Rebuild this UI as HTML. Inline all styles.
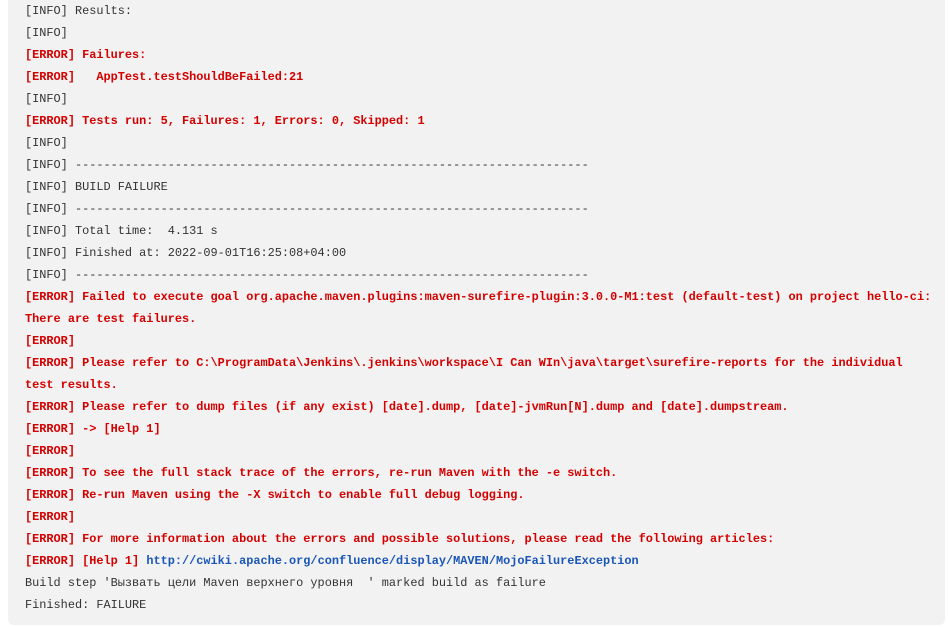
<!DOCTYPE html>
<html><head><meta charset="utf-8"><style>
html,body{margin:0;padding:0;background:#fff;width:948px;height:627px;overflow:hidden}
.box{position:absolute;left:8px;top:-10px;width:937px;height:635px;background:#f2f2f2;border-radius:6px}
pre{position:absolute;left:25px;top:0;margin:0;font-family:"Liberation Mono","DejaVu Sans Mono",monospace;font-size:11.9px;line-height:22px;color:#333}
.e{color:#d40000;font-weight:bold}
a{color:#1a56b8;font-weight:bold;text-decoration:none}
</style></head><body><div class="box"></div><pre>[INFO] Results:
[INFO]
<span class="e">[ERROR] Failures:</span>
<span class="e">[ERROR]   AppTest.testShouldBeFailed:21</span>
[INFO]
<span class="e">[ERROR] Tests run: 5, Failures: 1, Errors: 0, Skipped: 1</span>
[INFO]
[INFO] ------------------------------------------------------------------------
[INFO] BUILD FAILURE
[INFO] ------------------------------------------------------------------------
[INFO] Total time:  4.131 s
[INFO] Finished at: 2022-09-01T16:25:08+04:00
[INFO] ------------------------------------------------------------------------
<span class="e">[ERROR] Failed to execute goal org.apache.maven.plugins:maven-surefire-plugin:3.0.0-M1:test (default-test) on project hello-ci:
There are test failures.</span>
<span class="e">[ERROR]</span>
<span class="e">[ERROR] Please refer to C:\ProgramData\Jenkins\.jenkins\workspace\I Can WIn\java\target\surefire-reports for the individual
test results.</span>
<span class="e">[ERROR] Please refer to dump files (if any exist) [date].dump, [date]-jvmRun[N].dump and [date].dumpstream.</span>
<span class="e">[ERROR] -&gt; [Help 1]</span>
<span class="e">[ERROR]</span>
<span class="e">[ERROR] To see the full stack trace of the errors, re-run Maven with the -e switch.</span>
<span class="e">[ERROR] Re-run Maven using the -X switch to enable full debug logging.</span>
<span class="e">[ERROR]</span>
<span class="e">[ERROR] For more information about the errors and possible solutions, please read the following articles:</span>
<span class="e">[ERROR] [Help 1] </span><a>http://cwiki.apache.org/confluence/display/MAVEN/MojoFailureException</a>
Build step 'Вызвать цели Maven верхнего уровня  ' marked build as failure
Finished: FAILURE</pre></body></html>
